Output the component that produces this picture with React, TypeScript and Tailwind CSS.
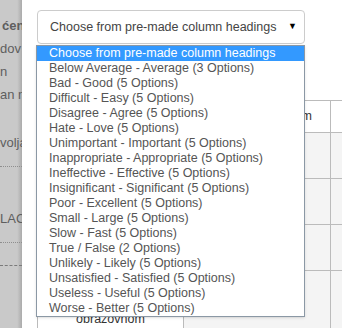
import React from "react";

const options = [
  "Choose from pre-made column headings",
  "Below Average - Average (3 Options)",
  "Bad - Good (5 Options)",
  "Difficult - Easy (5 Options)",
  "Disagree - Agree (5 Options)",
  "Hate - Love (5 Options)",
  "Unimportant - Important (5 Options)",
  "Inappropriate - Appropriate (5 Options)",
  "Ineffective - Effective (5 Options)",
  "Insignificant - Significant (5 Options)",
  "Poor - Excellent (5 Options)",
  "Small - Large (5 Options)",
  "Slow - Fast (5 Options)",
  "True / False (2 Options)",
  "Unlikely - Likely (5 Options)",
  "Unsatisfied - Satisfied (5 Options)",
  "Useless - Useful (5 Options)",
  "Worse - Better (5 Options)",
];

export default function App() {
  return (
    <div className="relative w-[342px] h-[328px] overflow-hidden flex bg-white text-[12.5px] font-['Liberation_Sans',Arial,sans-serif]">
      {/* Dimmed page behind the modal */}
      <div className="w-[22px] shrink-0 overflow-hidden whitespace-nowrap text-[13px] text-[#5e5e5e] bg-linear-to-r from-[#c9c9c9] from-[78%] to-[#ababab] flex flex-col pt-[14px]">
        <div className="h-[23px] leading-[23px] pl-[2px] font-bold">ćen</div>
        <div className="h-[23px] leading-[23px]">dov</div>
        <div className="h-[23px] leading-[23px]">n</div>
        <div className="h-[23px] leading-[23px]">an n</div>
        <div className="h-[23px] leading-[23px] mt-[25px]">volja</div>
        <div className="mt-[12px] border-b border-dotted border-[#8e8e8e]" />
        <div className="h-[23px] leading-[23px] mt-[40px]">LAC</div>
        <div className="mt-[12px] border-b border-dotted border-[#8e8e8e]" />
        <div className="mt-[22px] border-b border-dashed border-[#7a7a7a]" />
      </div>

      {/* Modal */}
      <div className="flex-1 min-w-0 overflow-hidden pl-[15px] pt-[10px]">
        <div className="w-[268px] h-[34px] border border-[#cccccc] rounded-[4px] flex items-center justify-between pl-[12px] pr-[7px] text-[#444]">
          <span>Choose from pre-made column headings</span>
          <span className="text-[9px] text-black">▼</span>
        </div>

        <table className="mt-[56px] border-collapse text-[#333] w-[400px] table-fixed">
          <colgroup>
            <col className="w-[146px]" />
            <col className="w-[147px]" />
            <col className="w-[107px]" />
          </colgroup>
          <thead>
            <tr className="h-[32px]">
              <th className="border border-[#bbb] font-normal"></th>
              <th className="border border-[#bbb] font-normal text-right pr-[18px]">Po obrazovnom</th>
              <th className="border border-[#bbb] font-normal"></th>
            </tr>
          </thead>
          <tbody>
            {[0, 1, 2].map((i) => (
              <tr key={i} className="h-[46px]">
                <td className="border border-[#bbb] bg-white"></td>
                <td className="border border-[#bbb] bg-[#f4f4f4]"></td>
                <td className="border border-[#bbb] bg-[#f4f4f4]"></td>
              </tr>
            ))}
            <tr className="h-[60px]">
              <td className="border border-[#bbb] bg-white align-top text-center pt-[39px]">obrazovnom</td>
              <td className="border border-[#bbb] bg-[#f4f4f4]"></td>
              <td className="border border-[#bbb] bg-[#f4f4f4]"></td>
            </tr>
          </tbody>
        </table>
      </div>

      {/* Open dropdown list */}
      <div className="absolute left-[36px] top-[45px] w-[269px] border border-[#8b98a5] bg-white shadow-sm">
        {options.map((o, i) => (
          <div
            key={o}
            className={
              i === 0
                ? "h-[15px] leading-[15px] pl-[12px] bg-[#3399ff] text-white whitespace-nowrap"
                : "h-[15px] leading-[15px] pl-[12px] text-[#555] whitespace-nowrap"
            }
          >
            {o}
          </div>
        ))}
      </div>
    </div>
  );
}
